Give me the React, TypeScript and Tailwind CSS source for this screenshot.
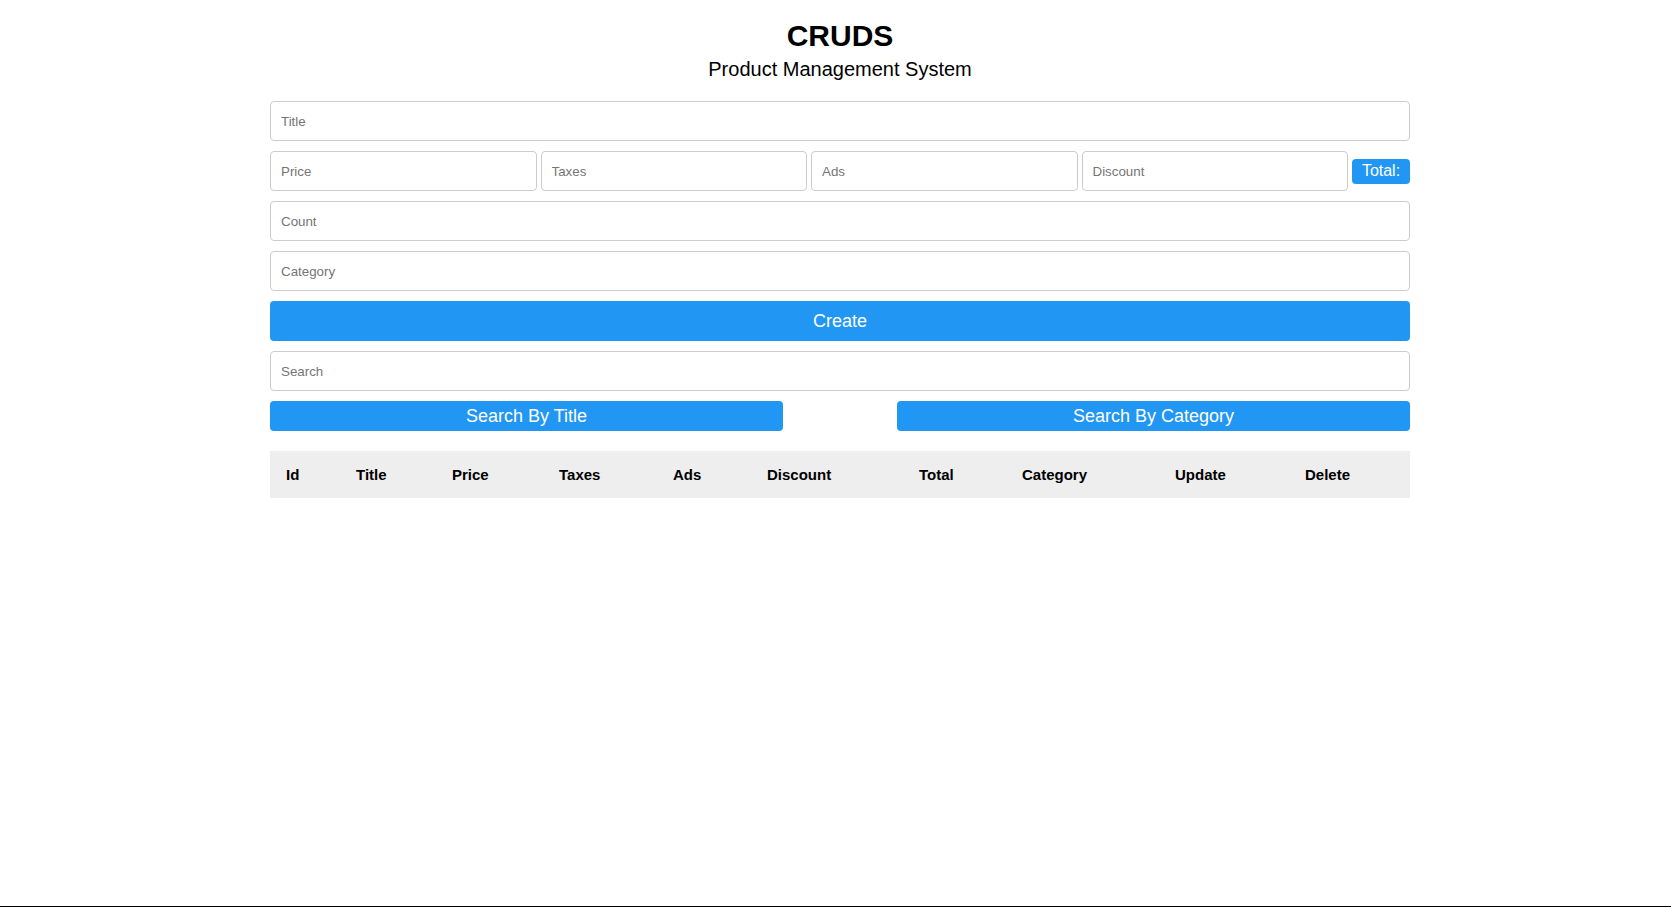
import React from "react";

const inputCls =
  "h-[40px] w-full rounded-[4px] border border-[#cccccc] bg-white px-[10px] text-[13.33px] text-black outline-none placeholder:text-[#757575]";

const cols: { label: string; w: string }[] = [
  { label: "Id", w: "w-[70px]" },
  { label: "Title", w: "w-[96px]" },
  { label: "Price", w: "w-[107px]" },
  { label: "Taxes", w: "w-[114px]" },
  { label: "Ads", w: "w-[94px]" },
  { label: "Discount", w: "w-[152px]" },
  { label: "Total", w: "w-[103px]" },
  { label: "Category", w: "w-[153px]" },
  { label: "Update", w: "w-[130px]" },
  { label: "Delete", w: "flex-1" },
];

export default function App() {
  return (
    <div
      className="flex min-h-[907px] flex-col bg-white text-black"
      style={{ fontFamily: '"Liberation Sans", Arial, sans-serif' }}
    >
      <div className="ml-[270px] w-[1140px]">
        <div className="flex flex-col items-center">
          <h1 className="mt-[20px] text-[30px] font-bold leading-[32px]">CRUDS</h1>
          <p className="mt-[6px] text-[20px] leading-[23px]">Product Management System</p>
        </div>

        <div className="mt-[20px] flex flex-col gap-[10px]">
          <input className={inputCls} placeholder="Title" />
          <div className="flex items-center gap-[4px]">
            <input className={inputCls} placeholder="Price" />
            <input className={inputCls} placeholder="Taxes" />
            <input className={inputCls} placeholder="Ads" />
            <input className={inputCls} placeholder="Discount" />
            <span className="flex h-[25px] w-[58px] shrink-0 items-center justify-center rounded-[4px] bg-[#2196f3] text-[16px] text-white">
              Total:
            </span>
          </div>
          <input className={inputCls} placeholder="Count" />
          <input className={inputCls} placeholder="Category" />
          <button className="h-[40px] w-full rounded-[4px] bg-[#2196f3] pt-[1px] text-[18px] text-white">
            Create
          </button>
          <input className={inputCls} placeholder="Search" />
          <div className="flex justify-between">
            <button className="h-[30px] w-[513px] rounded-[4px] bg-[#2196f3] text-[18px] text-white">
              Search By Title
            </button>
            <button className="h-[30px] w-[513px] rounded-[4px] bg-[#2196f3] text-[18px] text-white">
              Search By Category
            </button>
          </div>
        </div>

        <div className="mt-[20px] flex h-[47px] items-center bg-[#eeeeee] pl-[16px] pt-[1px] text-[15px] font-bold">
          {cols.map((c) => (
            <div key={c.label} className={c.w}>
              {c.label}
            </div>
          ))}
        </div>
      </div>
      <div className="mt-auto h-[1px] bg-black" />
    </div>
  );
}
